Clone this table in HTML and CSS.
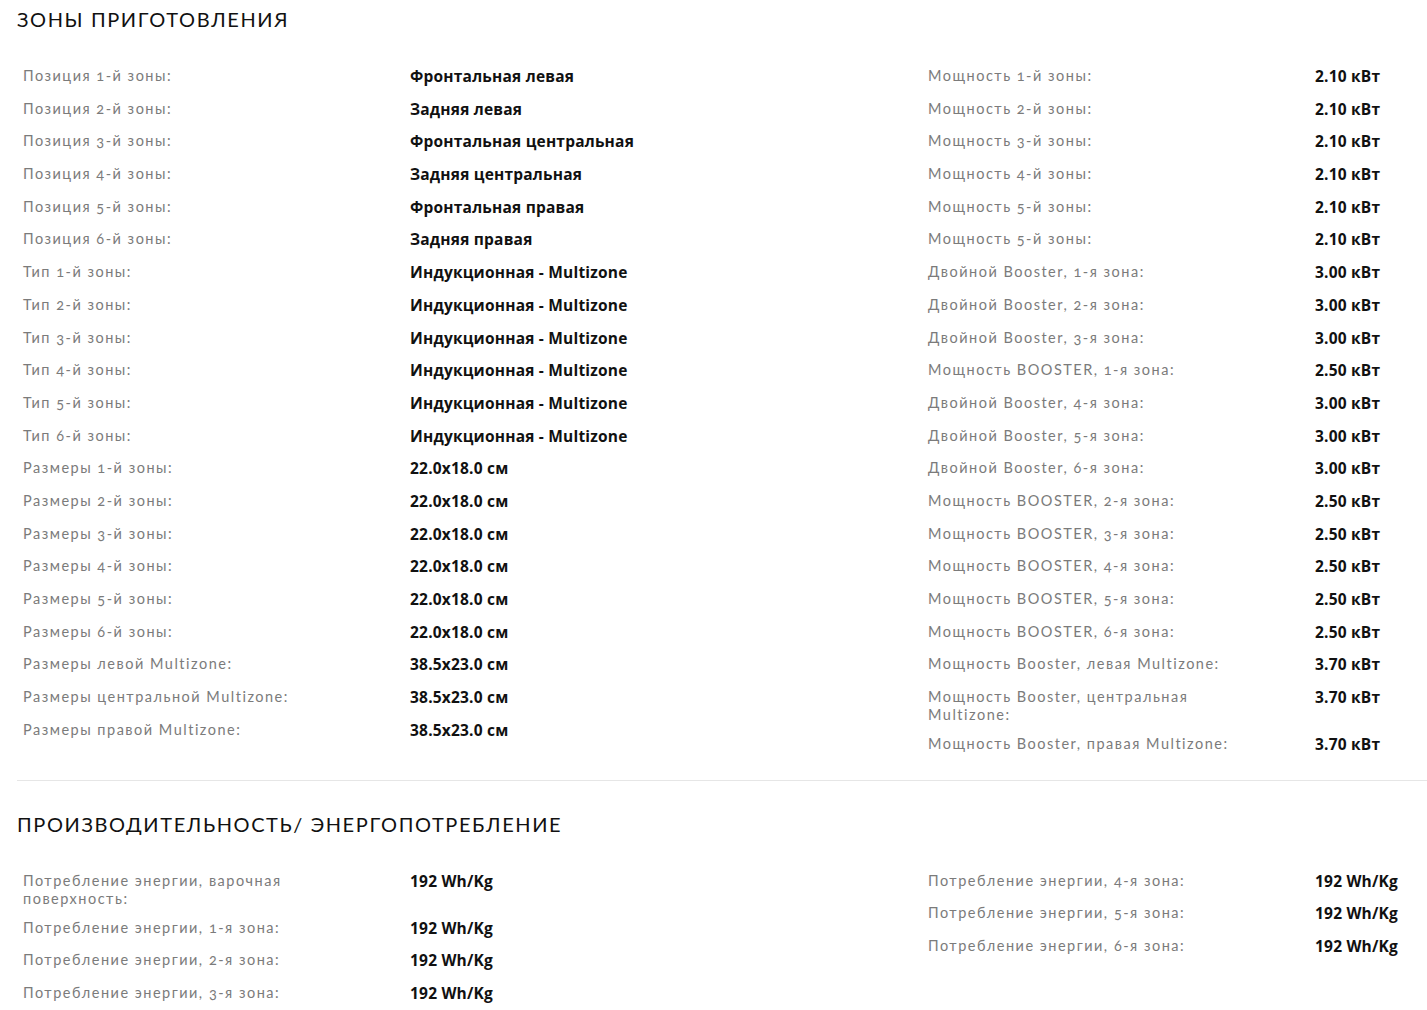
FILE: index.html
```html
<!DOCTYPE html>
<html lang="ru">
<head>
  <meta charset="UTF-8" />
  <meta name="viewport" content="width=device-width, initial-scale=1.0"/>
  <title>Характеристики</title>
  <link rel="stylesheet" href="styles.css">
</head>
<body>
  <section class="specs">
    <h2>Зоны приготовления</h2>
    <div class="halves">
      <div class="list">
        <div class="row"><div class="label">Позиция 1-й зоны:</div><div class="value">Фронтальная левая</div></div>
        <div class="row"><div class="label">Позиция 2-й зоны:</div><div class="value">Задняя левая</div></div>
        <div class="row"><div class="label">Позиция 3-й зоны:</div><div class="value">Фронтальная центральная</div></div>
        <div class="row"><div class="label">Позиция 4-й зоны:</div><div class="value">Задняя центральная</div></div>
        <div class="row"><div class="label">Позиция 5-й зоны:</div><div class="value">Фронтальная правая</div></div>
        <div class="row"><div class="label">Позиция 6-й зоны:</div><div class="value">Задняя правая</div></div>
        <div class="row"><div class="label">Тип 1-й зоны:</div><div class="value">Индукционная - Multizone</div></div>
        <div class="row"><div class="label">Тип 2-й зоны:</div><div class="value">Индукционная - Multizone</div></div>
        <div class="row"><div class="label">Тип 3-й зоны:</div><div class="value">Индукционная - Multizone</div></div>
        <div class="row"><div class="label">Тип 4-й зоны:</div><div class="value">Индукционная - Multizone</div></div>
        <div class="row"><div class="label">Тип 5-й зоны:</div><div class="value">Индукционная - Multizone</div></div>
        <div class="row"><div class="label">Тип 6-й зоны:</div><div class="value">Индукционная - Multizone</div></div>
        <div class="row"><div class="label">Размеры 1-й зоны:</div><div class="value">22.0x18.0 см</div></div>
        <div class="row"><div class="label">Размеры 2-й зоны:</div><div class="value">22.0x18.0 см</div></div>
        <div class="row"><div class="label">Размеры 3-й зоны:</div><div class="value">22.0x18.0 см</div></div>
        <div class="row"><div class="label">Размеры 4-й зоны:</div><div class="value">22.0x18.0 см</div></div>
        <div class="row"><div class="label">Размеры 5-й зоны:</div><div class="value">22.0x18.0 см</div></div>
        <div class="row"><div class="label">Размеры 6-й зоны:</div><div class="value">22.0x18.0 см</div></div>
        <div class="row"><div class="label">Размеры левой Multizone:</div><div class="value">38.5x23.0 см</div></div>
        <div class="row"><div class="label">Размеры центральной Multizone:</div><div class="value">38.5x23.0 см</div></div>
        <div class="row"><div class="label">Размеры правой Multizone:</div><div class="value">38.5x23.0 см</div></div>
      </div>
      <div class="list">
        <div class="row"><div class="label">Мощность 1-й зоны:</div><div class="value">2.10 кВт</div></div>
        <div class="row"><div class="label">Мощность 2-й зоны:</div><div class="value">2.10 кВт</div></div>
        <div class="row"><div class="label">Мощность 3-й зоны:</div><div class="value">2.10 кВт</div></div>
        <div class="row"><div class="label">Мощность 4-й зоны:</div><div class="value">2.10 кВт</div></div>
        <div class="row"><div class="label">Мощность 5-й зоны:</div><div class="value">2.10 кВт</div></div>
        <div class="row"><div class="label">Мощность 5-й зоны:</div><div class="value">2.10 кВт</div></div>
        <div class="row"><div class="label">Двойной Booster, 1-я зона:</div><div class="value">3.00 кВт</div></div>
        <div class="row"><div class="label">Двойной Booster, 2-я зона:</div><div class="value">3.00 кВт</div></div>
        <div class="row"><div class="label">Двойной Booster, 3-я зона:</div><div class="value">3.00 кВт</div></div>
        <div class="row"><div class="label">Мощность BOOSTER, 1-я зона:</div><div class="value">2.50 кВт</div></div>
        <div class="row"><div class="label">Двойной Booster, 4-я зона:</div><div class="value">3.00 кВт</div></div>
        <div class="row"><div class="label">Двойной Booster, 5-я зона:</div><div class="value">3.00 кВт</div></div>
        <div class="row"><div class="label">Двойной Booster, 6-я зона:</div><div class="value">3.00 кВт</div></div>
        <div class="row"><div class="label">Мощность BOOSTER, 2-я зона:</div><div class="value">2.50 кВт</div></div>
        <div class="row"><div class="label">Мощность BOOSTER, 3-я зона:</div><div class="value">2.50 кВт</div></div>
        <div class="row"><div class="label">Мощность BOOSTER, 4-я зона:</div><div class="value">2.50 кВт</div></div>
        <div class="row"><div class="label">Мощность BOOSTER, 5-я зона:</div><div class="value">2.50 кВт</div></div>
        <div class="row"><div class="label">Мощность BOOSTER, 6-я зона:</div><div class="value">2.50 кВт</div></div>
        <div class="row"><div class="label">Мощность Booster, левая Multizone:</div><div class="value">3.70 кВт</div></div>
        <div class="row"><div class="label">Мощность Booster, центральная Multizone:</div><div class="value">3.70 кВт</div></div>
        <div class="row"><div class="label">Мощность Booster, правая Multizone:</div><div class="value">3.70 кВт</div></div>
      </div>
    </div>
  </section>

  <section class="specs">
    <h2>Производительность/ Энергопотребление</h2>
    <div class="halves">
      <div class="list">
        <div class="row"><div class="label">Потребление энергии, варочная поверхность:</div><div class="value">192 Wh/Kg</div></div>
        <div class="row"><div class="label">Потребление энергии, 1-я зона:</div><div class="value">192 Wh/Kg</div></div>
        <div class="row"><div class="label">Потребление энергии, 2-я зона:</div><div class="value">192 Wh/Kg</div></div>
        <div class="row"><div class="label">Потребление энергии, 3-я зона:</div><div class="value">192 Wh/Kg</div></div>
      </div>
      <div class="list">
        <div class="row"><div class="label">Потребление энергии, 4-я зона:</div><div class="value">192 Wh/Kg</div></div>
        <div class="row"><div class="label">Потребление энергии, 5-я зона:</div><div class="value">192 Wh/Kg</div></div>
        <div class="row"><div class="label">Потребление энергии, 6-я зона:</div><div class="value">192 Wh/Kg</div></div>
      </div>
    </div>
  </section>
</body>
</html>
```

FILE: styles.css
```css
body {
  margin: 0;
  padding: 0;
  background: #fff;
  font-family: 'Lato', 'Open Sans', sans-serif;
  color: #111;
  overflow: hidden;
}

.specs {
  margin-left: 17px;
  padding-top: 7px;
}

.specs + .specs {
  border-top: 1px solid #e6e6e6;
  margin-top: 18px;
  padding-top: 31px;
}

h2 {
  margin: 0 0 30px;
  font-size: 20px;
  line-height: 24px;
  font-weight: 400;
  letter-spacing: 1.6px;
  text-transform: uppercase;
  color: #111;
}

.halves {
  display: grid;
  grid-template-columns: 905px 1fr;
}

.list {
  display: flex;
  flex-direction: column;
}

.row {
  display: grid;
  grid-template-columns: 393px 1fr;
  min-height: 32.7px;
}

.label {
  padding: 6px 62px 5px 6px;
  font-size: 14.5px;
  line-height: 18px;
  letter-spacing: 1.5px;
  color: #7b7b7b;
  font-variant-numeric: oldstyle-nums;
}

.value {
  padding: 6px 0 5px;
  font-family: 'Open Sans', 'Lato', sans-serif;
  font-size: 15.5px;
  line-height: 18px;
  font-weight: 700;
  letter-spacing: 0.2px;
  color: #111;
}
```
